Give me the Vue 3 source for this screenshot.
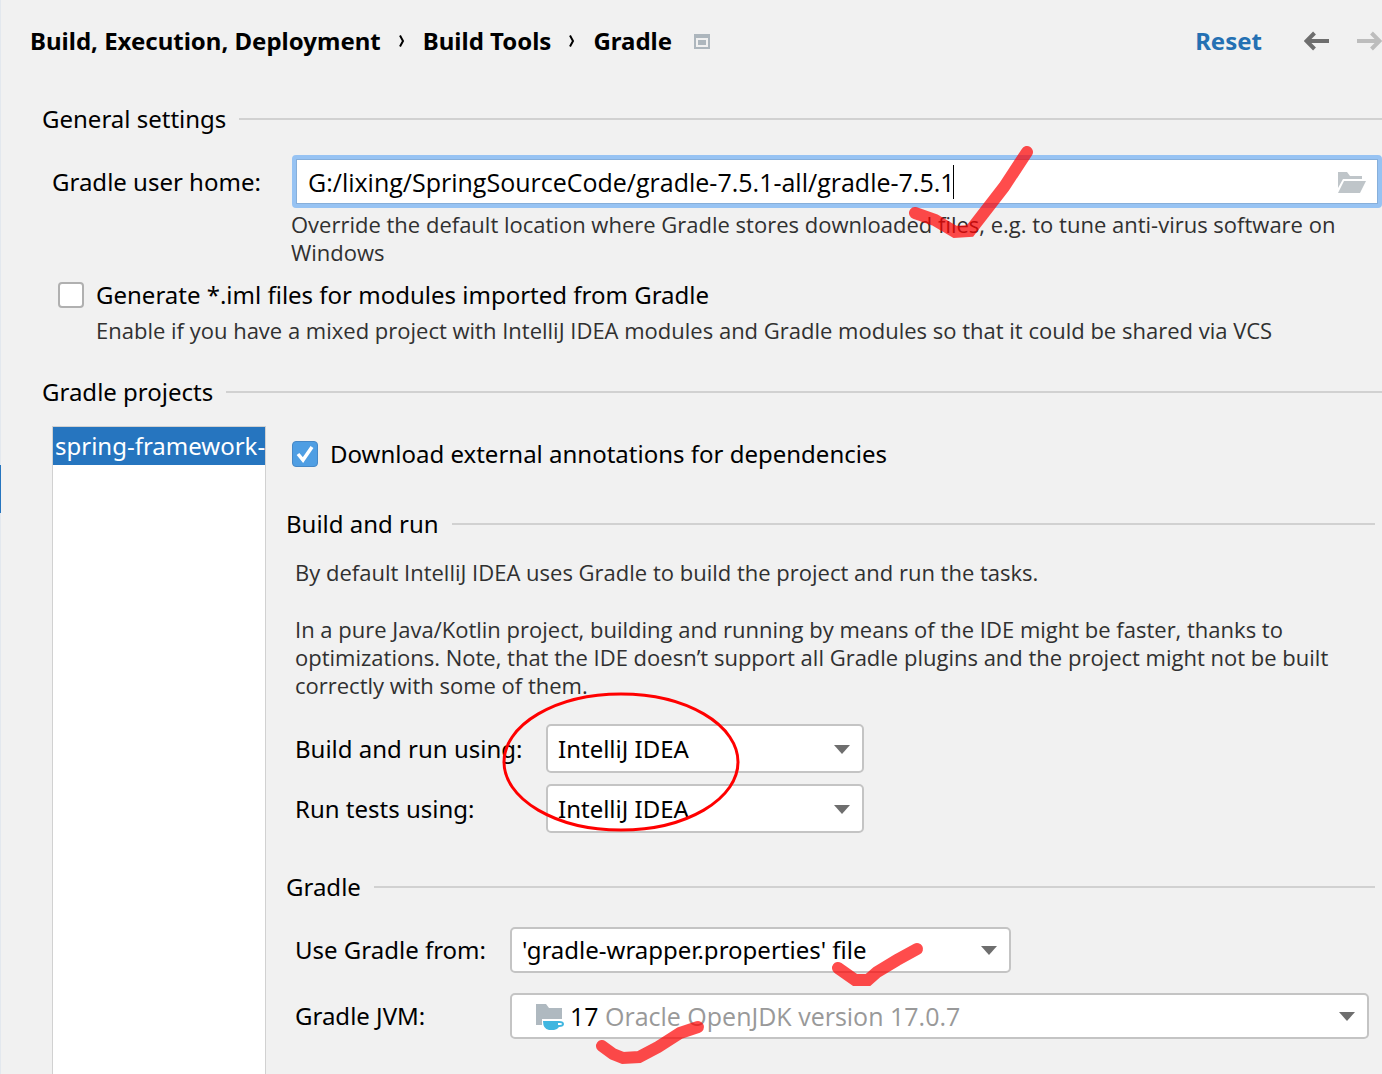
<script setup>
import { ref } from 'vue'

const home = ref('G:/lixing/SpringSourceCode/gradle-7.5.1-all/gradle-7.5.1')
const generateIml = ref(false)
const annotations = ref(true)
const buildUsing = ref('IntelliJ IDEA')
const testUsing = ref('IntelliJ IDEA')
const gradleFrom = ref("'gradle-wrapper.properties' file")
const jvm = ref('17')
</script>

<template>
  <main class="page">
    <div class="edge"><i></i></div>
    <header class="header">
      <nav class="crumbs">
        <b>Build, Execution, Deployment</b>
        <svg width="6" height="14" viewBox="0 0 6 14"><path d="M1 1.500 4 7 1 12.500" /></svg>
        <b>Build Tools</b>
        <svg width="6" height="14" viewBox="0 0 6 14"><path d="M1 1.500 4 7 1 12.500" /></svg>
        <b>Gradle</b>
      </nav>
      <svg class="scope" width="16" height="15" viewBox="0 0 16 15">
        <path fill="#adb6bd" fill-rule="evenodd" d="M0 0h16v15H0zM2 4v9h12V4z" />
        <path fill="#adb6bd" d="M4 6h8v5H4z" />
      </svg>
      <div class="actions">
        <button class="reset" type="button">Reset</button>
        <button class="arrow" type="button" aria-label="Back">
          <svg width="26" height="20" viewBox="0 0 26 20"><path d="M25 10H3M10.500 2 2.500 10l8 8" /></svg>
        </button>
        <button class="arrow off" type="button" aria-label="Forward">
          <svg width="26" height="20" viewBox="0 0 26 20"><path d="M1 10h22M15.500 2l8 8-8 8" /></svg>
        </button>
      </div>
    </header>

    <h2 class="section">General settings</h2>
    <div class="home">
      <label for="home">Gradle user home:</label>
      <div class="home-main">
        <div class="field">
          <input id="home" v-model="home" type="text" spellcheck="false" />
          <span class="caret"></span>
          <button type="button" aria-label="Browse">
            <svg width="28" height="22" viewBox="0 0 28 22">
              <path fill="#bfc5c9" d="M0 1h9l3 4h12v3H5L0 17z" />
              <path fill="#bfc5c9" d="M6 10h22l-6 12H0z" />
            </svg>
          </button>
        </div>
        <p class="hint">Override the default location where Gradle stores downloaded files, e.g. to tune anti-virus software on Windows</p>
      </div>
    </div>
    <div class="iml">
      <label class="check"><input v-model="generateIml" type="checkbox" />Generate *.iml files for modules imported from Gradle</label>
      <p class="hint">Enable if you have a mixed project with IntelliJ IDEA modules and Gradle modules so that it could be shared via VCS</p>
    </div>

    <h2 class="section projects-title">Gradle projects</h2>
    <div class="projects">
      <ul class="list">
        <li>spring-framework-</li>
      </ul>
      <div class="detail">
        <label class="check"><input v-model="annotations" type="checkbox" />Download external annotations for dependencies</label>

        <h3 class="section build-title">Build and run</h3>
        <div class="text">
          <p class="hint">By default IntelliJ IDEA uses Gradle to build the project and run the tasks.</p>
          <p class="hint">In a pure Java/Kotlin project, building and running by means of the IDE might be faster, thanks to optimizations. Note, that the IDE doesn’t support all Gradle plugins and the project might not be built correctly with some of them.</p>
        </div>
        <div class="form runners">
          <label for="build">Build and run using:</label>
          <div class="combo">
            <select id="build" v-model="buildUsing"><option>IntelliJ IDEA</option><option>Gradle</option></select>
          </div>
          <label for="tests">Run tests using:</label>
          <div class="combo">
            <select id="tests" v-model="testUsing"><option>IntelliJ IDEA</option><option>Gradle</option></select>
          </div>
        </div>

        <h3 class="section gradle-title">Gradle</h3>
        <div class="form distribution">
          <label for="from">Use Gradle from:</label>
          <div class="combo short">
            <select id="from" v-model="gradleFrom"><option>'gradle-wrapper.properties' file</option></select>
          </div>
          <label for="jvm">Gradle JVM:</label>
          <div class="combo jvm">
            <select id="jvm" v-model="jvm"><option>17</option></select>
            <div class="jdk">
              <svg width="29" height="27" viewBox="0 0 29 27">
                <path fill="#afb9c0" d="M0 1h10l3 4h13v11H6v6H0z" />
                <path fill="#40b6e0" fill-rule="evenodd" d="M7 18h16q5 0 5 3t-5 3q-2 3-5 3h-5q-6-1-6-9zM22 20v2h2q2 0 2-1t-2-1z" />
              </svg>
              <span>Oracle OpenJDK version 17.0.7</span>
            </div>
          </div>
        </div>
      </div>
    </div>

    <svg class="marks" width="1040" height="1074" viewBox="0 0 1040 1074" aria-hidden="true">
      <g fill="none" stroke="#ff0000" stroke-opacity="0.700" stroke-width="12" stroke-linecap="round">
        <path d="M915 213 935 220 955 232 970 231 1004 187 1027 152" />
        <path d="M838 968 855 980 868 980 877 972 897 960 917 949" />
        <path d="M602 1046 613 1054 623 1058 639 1057 658 1047 680 1033 698 1027" />
      </g>
      <ellipse cx="621" cy="762" rx="117" ry="68" fill="none" stroke="#f00" stroke-width="3" />
    </svg>
  </main>
</template>

<style>
body {
  margin: 0;
  background: #f1f1f1;
}
</style>

<style scoped>
.page {
  position: relative;
  box-sizing: border-box;
  display: flex;
  flex-direction: column;
  min-height: 100vh;
  padding-left: 42px;
  overflow: hidden;
  background: #f1f1f1;
  color: #000;
  font: 24px/32px "Noto Sans", "Open Sans", sans-serif;
}
.edge {
  position: absolute;
  inset: 0 auto 0 0;
  width: 1px;
  background: #e3e8ee;
}
.edge i {
  position: absolute;
  top: 465px;
  width: 1px;
  height: 48px;
  background: #2675bf;
}
h2, h3, p, ul {
  margin: 0;
  padding: 0;
  font-weight: 400;
}
button {
  display: flex;
  padding: 0;
  border: 0;
  background: none;
  font: inherit;
}
.header {
  display: flex;
  align-items: center;
  height: 82px;
  margin-left: -12px;
}
.crumbs {
  display: flex;
  align-items: center;
  gap: 18px;
}
.crumbs svg {
  fill: none;
  stroke: #000;
  stroke-width: 2;
}
.scope {
  margin-left: 22px;
}
.actions {
  display: flex;
  align-items: center;
  gap: 26px;
  margin-left: auto;
}
.reset {
  margin-right: 16px;
  color: #2470b3;
  font-weight: 700;
}
.arrow svg {
  fill: none;
  stroke: #6e6e6e;
  stroke-width: 4;
}
.off svg {
  stroke: #bdbdbd;
}
.section {
  display: flex;
  align-items: center;
  gap: 13px;
  margin-top: 21px;
  font-size: 24px;
}
.section::after {
  content: "";
  flex: 1;
  height: 2px;
  background: #d1d1d1;
}
.hint {
  color: #303030;
  font-family: "Open Sans", "Noto Sans", sans-serif;
  font-size: 22px;
  line-height: 28px;
}
.home {
  display: flex;
  margin: 20px 0 0 10px;
}
.home label {
  width: 240px;
  flex: none;
  padding-top: 11px;
}
.home-main {
  flex: 1;
}
.home-main .hint {
  margin: 2px 40px 0 -1px;
}
.field {
  display: flex;
  align-items: center;
  box-sizing: border-box;
  height: 53px;
  padding: 0 12px;
  border: 4px solid #97c3f3;
  border-radius: 4px;
  background: #fff;
  box-shadow: inset 0 0 0 1px #87afda;
}
.field input {
  field-sizing: content;
  padding: 0;
  border: 0;
  outline: 0;
  background: none;
  font: 25px/32px "Open Sans", "Noto Sans", sans-serif;
}
.caret {
  width: 1px;
  height: 34px;
  margin-left: -2px;
  background: #000;
}
.field button {
  margin-left: auto;
}
.iml {
  margin: 13px 0 0 16px;
}
.iml .hint {
  margin: 5px 0 0 38px;
}
.check {
  display: flex;
  align-items: center;
  gap: 12px;
}
.check input {
  appearance: none;
  box-sizing: border-box;
  width: 26px;
  height: 26px;
  margin: 0;
  border: 2px solid #b0b0b0;
  border-radius: 4px;
  background: #fff;
}
.check input:checked {
  border: 1px solid #4688c7;
  background: #4f9ee3 url("data:image/svg+xml,%3Csvg xmlns='http://www.w3.org/2000/svg' viewBox='0 0 24 24'%3E%3Cpath d='M5 12l5 6 9-13' fill='none' stroke='white' stroke-width='3.500'/%3E%3C/svg%3E") center / 24px no-repeat;
}
.projects-title {
  margin-top: 32px;
}
.projects {
  display: flex;
  flex: 1;
  margin-top: 18px;
}
.list {
  box-sizing: border-box;
  flex: none;
  width: 214px;
  margin-left: 10px;
  border: 1px solid #d1d1d1;
  border-bottom: 0;
  background: #fff;
  list-style: none;
}
.list li {
  padding: 2px 0 2px 2px;
  background: #2675bf;
  color: #fff;
  line-height: 34px;
  white-space: nowrap;
}
.detail {
  flex: 1;
  min-width: 0;
  padding: 12px 7px 30px 20px;
}
.detail .check {
  margin-left: 6px;
}
.build-title {
  margin-top: 38px;
}
.text {
  display: flex;
  flex-direction: column;
  gap: 29px;
  margin: 18px 40px 0 9px;
}
.form {
  display: grid;
  align-items: center;
  margin-left: 9px;
}
.runners {
  grid-template-columns: 251px 318px;
  gap: 11px 0;
  margin-top: 25px;
}
.distribution {
  grid-template-columns: 215px 1fr;
  gap: 20px 0;
  margin-top: 24px;
}
.gradle-title {
  margin-top: 38px;
}
.combo {
  position: relative;
}
.combo::after {
  content: "";
  position: absolute;
  top: 50%;
  right: 14px;
  margin-top: -4px;
  border: 8px solid transparent;
  border-top: 9px solid #6e6e6e;
  border-bottom: 0;
  pointer-events: none;
}
.combo select {
  appearance: none;
  display: block;
  box-sizing: border-box;
  width: 100%;
  height: 49px;
  padding: 0 40px 0 10px;
  border: 2px solid #c4c4c4;
  border-radius: 5px;
  background: #fff;
  color: #000;
  font: inherit;
}
.distribution .combo select {
  height: 46px;
}
.short {
  width: 501px;
}
.jvm {
  margin-right: 6px;
  font-family: "Open Sans", "Noto Sans", sans-serif;
  font-size: 25px;
}
.combo.jvm select {
  padding-left: 58px;
}
.jdk {
  position: absolute;
  inset: 0 auto 0 26px;
  display: flex;
  align-items: center;
  gap: 40px;
  color: #999;
  pointer-events: none;
}
.marks {
  position: absolute;
  top: 0;
  left: 0;
  pointer-events: none;
}
</style>
